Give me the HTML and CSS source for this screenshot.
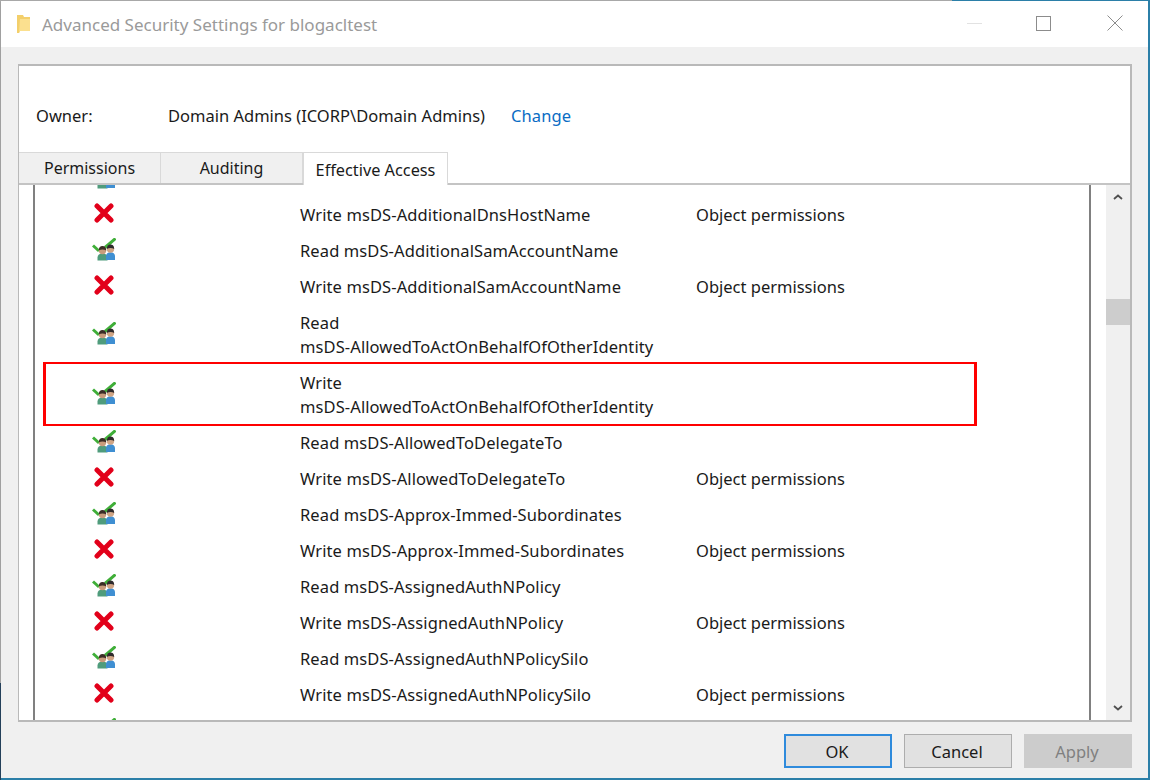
FILE: index.html
```html
<!DOCTYPE html>
<html lang="en">
<head>
    <meta charset="UTF-8">
    <title>Advanced Security Settings for blogacltest</title>
    <link rel="stylesheet" href="styles.css">
</head>
<body>
    <svg class="icon-defs">
        <symbol id="deny" viewBox="0 0 20 20">
            <path d="M3 3L17 17M17 3L3 17" stroke="#e2001a" stroke-width="5" stroke-linecap="round" fill="none"/>
        </symbol>
        <symbol id="allow" viewBox="0 0 24 24">
            <path d="M1 7.500L7 13" stroke="#3fae38" stroke-width="3" fill="none"/>
            <path d="M13 9.500L23.500 .5" stroke="#3fae38" stroke-width="3" fill="none"/>
            <path d="M5.500 22.500v-3c0-2.600 2-4 5-4s5 1.400 5 4v3z" fill="#4f9c7c"/>
            <path d="M14 22v-4c0-2.500 2-3.800 4.500-3.800s4.500 1.300 4.500 3.800v4z" fill="#3f8fd2"/>
            <circle cx="10.500" cy="12.500" r="3.700" fill="#c99c7c"/>
            <path d="M6.800 12.500c0-3.200 1.500-4.500 3.700-4.500s3.700 1.300 3.700 4.500c-2-1.300-5.400-1.300-7.400 0z" fill="#3b2d26"/>
            <circle cx="18.500" cy="11" r="3.700" fill="#d0a585"/>
            <path d="M14.800 11c0-3.200 1.500-4.500 3.700-4.500s3.700 1.300 3.700 4.500c-2-1.300-5.400-1.300-7.400 0z" fill="#2e2a2c"/>
        </symbol>
    </svg>

    <div class="window">
        <div class="titlebar">
            <svg class="folder" width="16" height="20" viewBox="0 0 16 20">
                <path d="M1 1h6l1 2h6v14H4l-1 2H1z" fill="#f3cf6b"/>
                <path d="M4 5h10v12H4l-1 2z" fill="#fbe08f"/>
            </svg>
            <span class="title">Advanced Security Settings for blogacltest</span>
            <div class="controls">
                <span class="ctl-min"></span>
                <span class="ctl-max"></span>
                <svg class="ctl-close" width="16" height="16" viewBox="0 0 16 16">
                    <path d="M.5 .5L15.500 15.500M15.500 .5L.5 15.500" stroke="#8c8c8c" fill="none"/>
                </svg>
            </div>
        </div>

        <div class="content">
            <div class="panel">
                <div class="owner">
                    <span class="owner-label">Owner:</span>
                    <span class="owner-name">Domain Admins (ICORP\Domain Admins)</span>
                    <a class="owner-link">Change</a>
                </div>
                <div class="tabs">
                    <div class="tab">Permissions</div>
                    <div class="tab">Auditing</div>
                    <div class="tab active">Effective Access</div>
                </div>
                <div class="list-area">
                    <div class="list">
                        <div class="rows">
                            <div class="row"><svg class="ico-allow"><use href="#allow"/></svg><span></span><span></span></div>
                            <div class="row"><svg class="ico-deny"><use href="#deny"/></svg><span>Write msDS-AdditionalDnsHostName</span><span class="scope">Object permissions</span></div>
                            <div class="row"><svg class="ico-allow"><use href="#allow"/></svg><span>Read msDS-AdditionalSamAccountName</span><span></span></div>
                            <div class="row"><svg class="ico-deny"><use href="#deny"/></svg><span>Write msDS-AdditionalSamAccountName</span><span class="scope">Object permissions</span></div>
                            <div class="row tall"><svg class="ico-allow"><use href="#allow"/></svg><span>Read<br>msDS-AllowedToActOnBehalfOfOtherIdentity</span><span></span></div>
                            <div class="row tall marked"><svg class="ico-allow"><use href="#allow"/></svg><span>Write<br>msDS-AllowedToActOnBehalfOfOtherIdentity</span><span></span></div>
                            <div class="row"><svg class="ico-allow"><use href="#allow"/></svg><span>Read msDS-AllowedToDelegateTo</span><span></span></div>
                            <div class="row"><svg class="ico-deny"><use href="#deny"/></svg><span>Write msDS-AllowedToDelegateTo</span><span class="scope">Object permissions</span></div>
                            <div class="row"><svg class="ico-allow"><use href="#allow"/></svg><span>Read msDS-Approx-Immed-Subordinates</span><span></span></div>
                            <div class="row"><svg class="ico-deny"><use href="#deny"/></svg><span>Write msDS-Approx-Immed-Subordinates</span><span class="scope">Object permissions</span></div>
                            <div class="row"><svg class="ico-allow"><use href="#allow"/></svg><span>Read msDS-AssignedAuthNPolicy</span><span></span></div>
                            <div class="row"><svg class="ico-deny"><use href="#deny"/></svg><span>Write msDS-AssignedAuthNPolicy</span><span class="scope">Object permissions</span></div>
                            <div class="row"><svg class="ico-allow"><use href="#allow"/></svg><span>Read msDS-AssignedAuthNPolicySilo</span><span></span></div>
                            <div class="row"><svg class="ico-deny"><use href="#deny"/></svg><span>Write msDS-AssignedAuthNPolicySilo</span><span class="scope">Object permissions</span></div>
                            <div class="row"><svg class="ico-allow"><use href="#allow"/></svg><span></span><span></span></div>
                        </div>
                    </div>
                    <div class="scrollbar">
                        <svg class="arrow" width="10" height="6" viewBox="0 0 10 6"><path d="M1 5L5 1.500L9 5" stroke="#505050" stroke-width="1.800" fill="none"/></svg>
                        <div class="thumb"></div>
                        <svg class="arrow arrow-down" width="10" height="6" viewBox="0 0 10 6"><path d="M1 1L5 4.500L9 1" stroke="#505050" stroke-width="1.800" fill="none"/></svg>
                    </div>
                </div>
            </div>

            <div class="buttons">
                <button class="btn default">OK</button>
                <button class="btn">Cancel</button>
                <button class="btn disabled">Apply</button>
            </div>
        </div>
    </div>
</body>
</html>
```

FILE: styles.css
```css
html, body {
    margin: 0;
    padding: 0;
}

body {
    width: 1150px;
    height: 780px;
    overflow: hidden;
    box-sizing: border-box;
    padding: 1px 2px 2px 1px;
    font-family: "Noto Sans", "Open Sans", sans-serif;
    font-size: 16.5px;
    letter-spacing: .1px;
    color: #1a1a1a;
    /* window edge: grey where it is behind another window, accent otherwise */
    background:
        linear-gradient(to right, #a8a8a8 952px, #2b7fa8 952px) top / 100% 2px no-repeat,
        linear-gradient(to bottom, #a0a0a0 683px, #24405a 683px) left / 1px 100% no-repeat,
        #2b7fa8;
}

.icon-defs {
    display: none;
}

.window {
    height: 100%;
    display: flex;
    flex-direction: column;
    background: #f0f0f0;
}

/* Title bar */
.titlebar {
    height: 46px;
    flex: none;
    display: flex;
    align-items: center;
    background: #fff;
    padding-left: 15px;
}

.folder {
    margin-right: 10px;
    margin-top: -1px;
}

.title {
    font-size: 17px;
    letter-spacing: 0;
    color: #9a9a9a;
}

.controls {
    margin-left: auto;
    display: flex;
    align-items: center;
    margin-right: 25px;
    margin-top: -2px;
}

.ctl-min {
    width: 15px;
    height: 1px;
    background: #e2e2e2;
    margin-right: 54px;
}

.ctl-max {
    width: 13px;
    height: 13px;
    border: 1px solid #8c8c8c;
    margin-right: 56px;
}

.ctl-close {
    display: block;
}

/* Main panel */
.content {
    flex: 1;
    display: flex;
    flex-direction: column;
    padding: 17px 16px 0 17px;
}

.panel {
    height: 658px;
    box-sizing: border-box;
    display: flex;
    flex-direction: column;
    background: #fff;
    border: 2px solid #b9b9b9;
    border-width: 2px 2px 2px 1px;
}

.owner {
    height: 86px;
    flex: none;
    display: flex;
    align-items: center;
    padding: 13px 0 0 17px;
    box-sizing: border-box;
    letter-spacing: 0;
}

.owner-label {
    width: 132px;
}

.owner-name {
    width: 343px;
}

.owner-link {
    color: #0a6cc4;
    letter-spacing: .1px;
}

.tabs {
    display: flex;
    height: 33px;
    flex: none;
    border-bottom: 2px solid #c4c4c4;
    box-sizing: border-box;
    font-size: 16px;
    letter-spacing: 0;
}

.tab {
    width: 142px;
    box-sizing: border-box;
    background: #f0f0f0;
    border-top: 1px solid #d9d9d9;
    border-right: 1px solid #d9d9d9;
    text-align: center;
    line-height: 31px;
}

.tab.active {
    width: 145px;
    height: 33px;
    background: #fff;
    border: 1px solid #d9d9d9;
    border-bottom: none;
    font-size: 16.3px;
    line-height: 34px;
    position: relative;
    z-index: 1;
}

.list-area {
    flex: 1;
    min-height: 0;
    display: flex;
    padding-left: 14px;
}

.list {
    width: 1059px;
    box-sizing: border-box;
    border-left: 2px solid #808080;
    border-right: 2px solid #808080;
    overflow: hidden;
}

.rows {
    margin-top: -24px;
}

.row {
    height: 36px;
    display: grid;
    grid-template-columns: 265px 396px 1fr;
    align-items: center;
    line-height: 24px;
    position: relative;
}

.row.tall {
    height: 60px;
}

.scope {
    letter-spacing: 0;
}

/* red annotation drawn over the screenshot */
.row.marked::after {
    content: "";
    position: absolute;
    left: 8px;
    top: -3px;
    width: 934px;
    height: 64px;
    box-sizing: border-box;
    border: 3px solid #f00;
    border-width: 2px 3px 2px 3px;
}

.ico-deny {
    width: 20px;
    height: 20px;
    margin: 0 0 4px 59px;
    filter: blur(.4px);
}

.ico-allow {
    width: 24px;
    height: 24px;
    margin: 0 0 2px 57px;
    filter: blur(.4px);
}

.scrollbar {
    width: 24px;
    margin-left: 15px;
    background: #f0f0f0;
    display: flex;
    flex-direction: column;
    align-items: center;
    position: relative;
}

.arrow {
    margin-top: 9px;
    flex: none;
}

.arrow-down {
    margin-top: auto;
    margin-bottom: 9px;
}

.thumb {
    position: absolute;
    top: 114px;
    left: 0;
    width: 24px;
    height: 26px;
    background: #cdcdcd;
}

/* Buttons */
.buttons {
    display: flex;
    justify-content: flex-end;
    gap: 12px;
    margin-top: 12px;
}

.btn {
    width: 108px;
    height: 34px;
    box-sizing: border-box;
    background: #e1e1e1;
    border: 1px solid #adadad;
    font-family: inherit;
    font-size: 16.5px;
    color: #1a1a1a;
    padding: 0 2px 0 0;
}

.btn.default {
    border: 2px solid #2f8bdc;
}

.btn.disabled {
    background: #cccccc;
    border-color: #cccccc;
    color: #808080;
}
```
